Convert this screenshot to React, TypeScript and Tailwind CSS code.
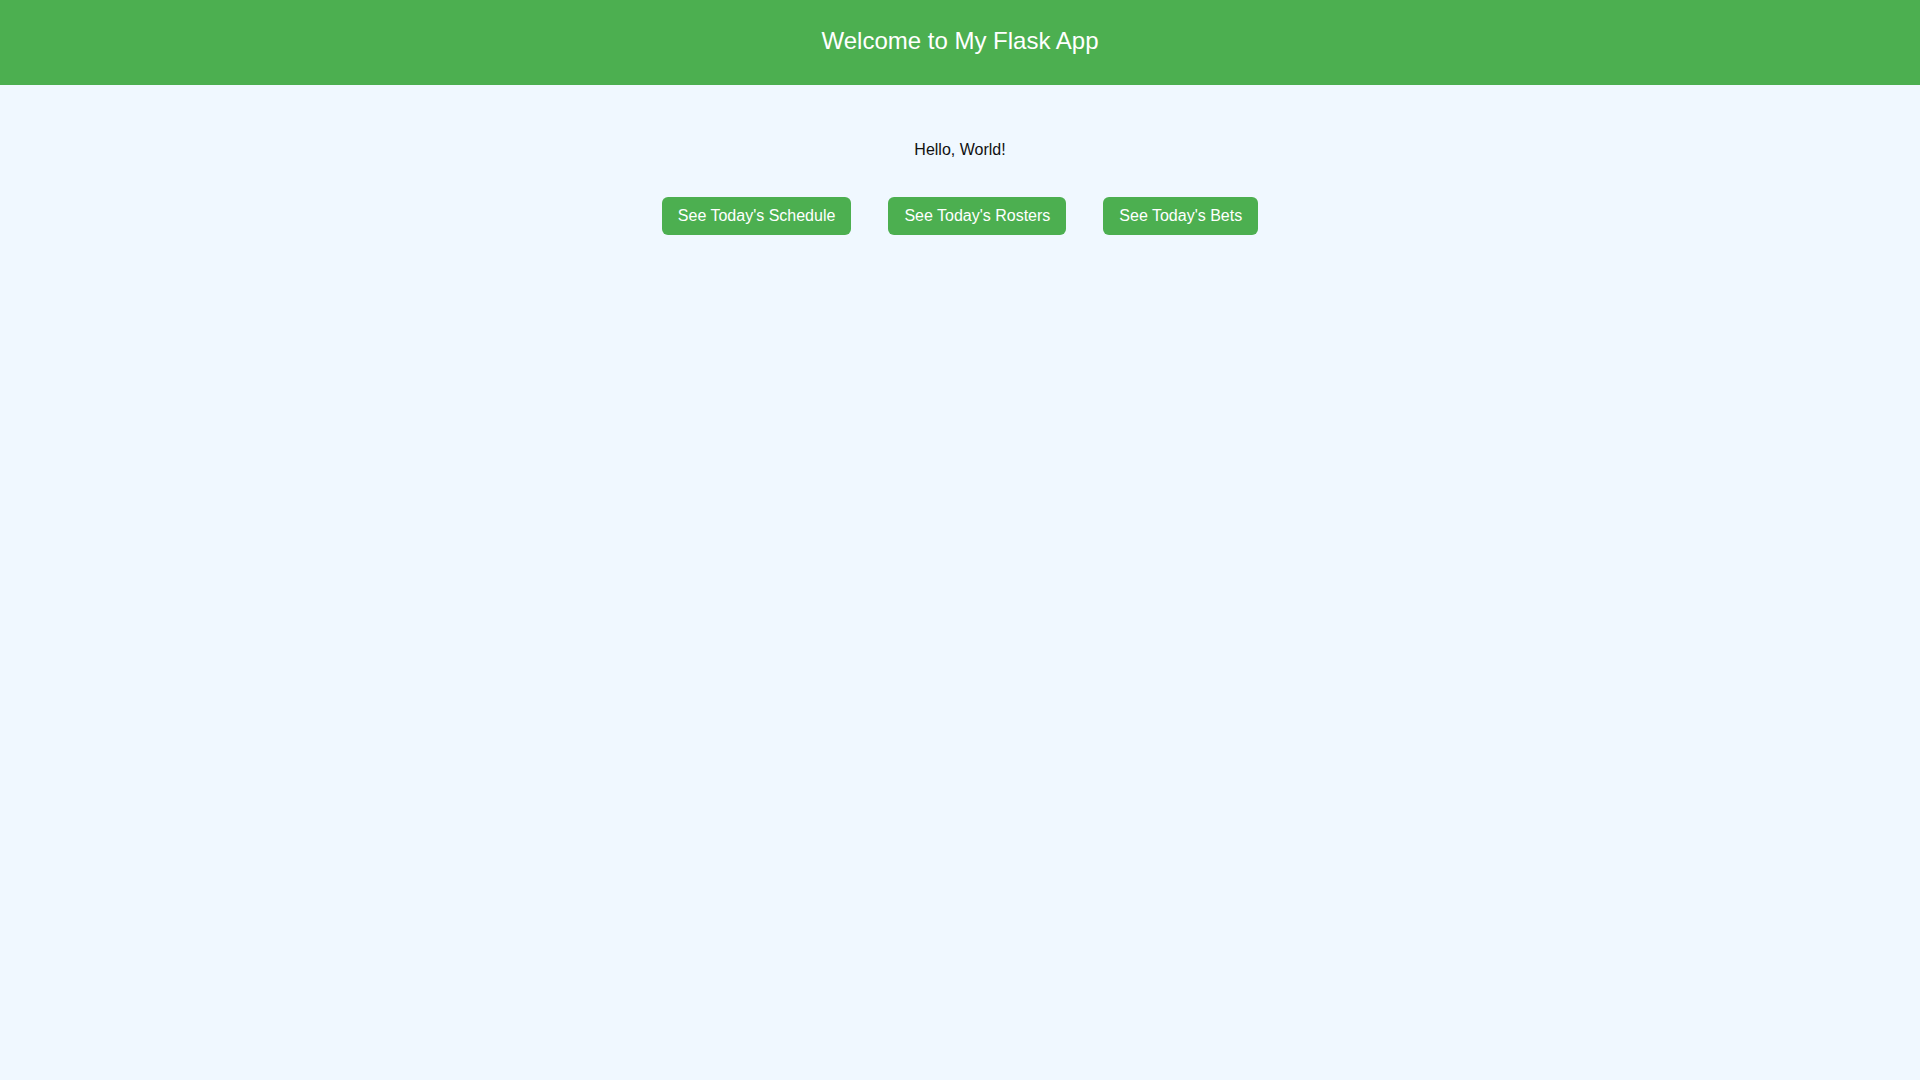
export default function App() {
  const links = ["See Today's Schedule", "See Today's Rosters", "See Today's Bets"];

  return (
    <div className="min-h-screen bg-[#f0f8ff] font-['Liberation_Sans',Arial,sans-serif] text-[#111]">
      <header className="flex h-[85px] items-center justify-center bg-[#4caf50] pb-[3px]">
        <h1 className="text-[24px] text-white">Welcome to My Flask App</h1>
      </header>
      <main className="flex flex-col items-center pt-[56px]">
        <p className="text-[16px] leading-[18px]">Hello, World!</p>
        <div className="mt-[38px] flex gap-[37px]">
          {links.map((label) => (
            <button
              key={label}
              className="rounded-[6px] bg-[#4caf50] px-[16px] py-[10px] text-[16px] leading-[18px] text-white"
            >
              {label}
            </button>
          ))}
        </div>
      </main>
    </div>
  );
}
